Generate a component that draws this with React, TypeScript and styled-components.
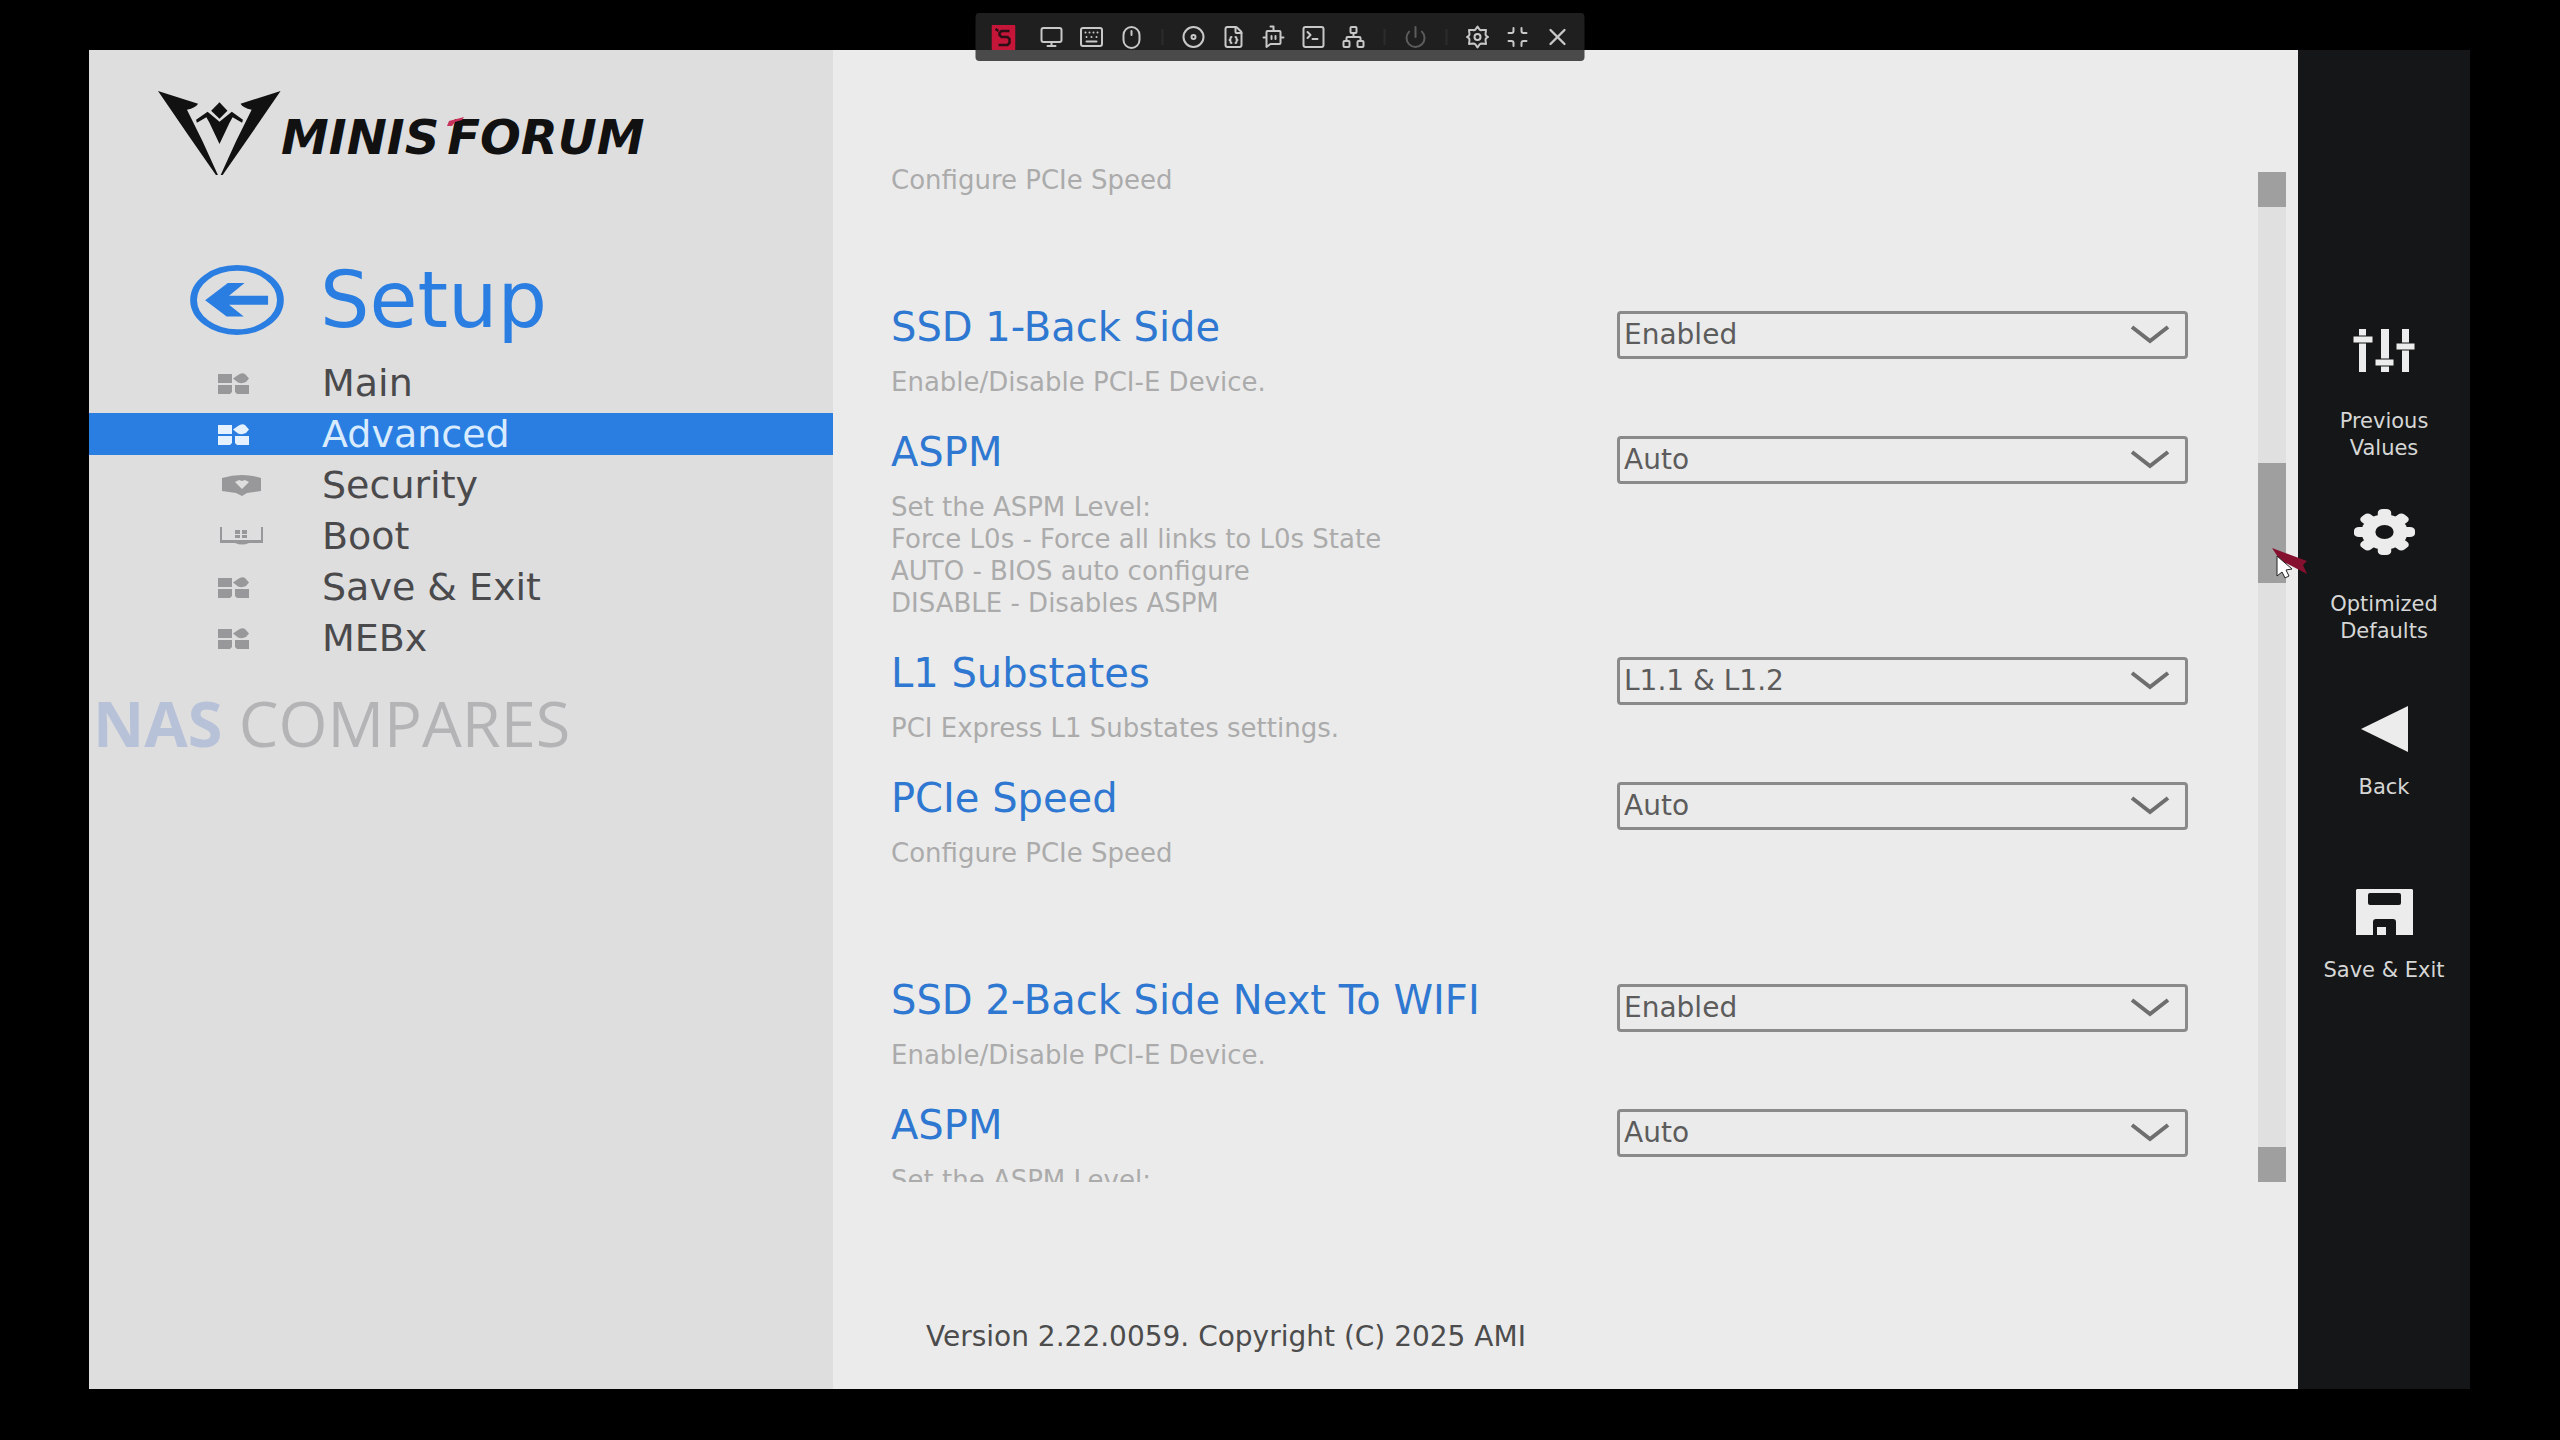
import React from "react";
import styled, { createGlobalStyle, css } from "styled-components";
import { Monitor, Mouse, Disc, FileJson, Network, Power, Minimize, X } from "lucide-react";

const ui = `"DejaVu Sans", Verdana, sans-serif`;
const accent = "#2a7de1";

const GlobalStyle = createGlobalStyle`
  *, *::before, *::after { box-sizing: border-box; }
  body { margin: 0; background: #000; font-family: ${ui}; }
  button, select { font: inherit; }
  h1, p, ul { margin: 0; padding: 0; }
`;

const Screen = styled.div`
  height: 100vh;
  min-height: 1240px;
  padding: 50px 90px 51px 89px;
  background: #000;
`;

const Frame = styled.div`
  height: 100%;
  display: grid;
  grid-template-columns: 744px 1fr 172px;
  grid-template-rows: minmax(0, 1fr);
`;

/* Remote-control toolbar */
const Toolbar = styled.div`
  position: fixed;
  z-index: 2;
  top: 13px;
  left: 50%;
  transform: translateX(-50%);
  height: 48px;
  padding: 0 7px 0 8px;
  display: flex;
  align-items: center;
  border-radius: 4px;
  background: rgba(38, 38, 38, 0.82);
`;

const Tool = styled.button<{ $dim?: boolean }>`
  width: 40px;
  height: 40px;
  padding: 0;
  display: grid;
  place-items: center;
  border: 0;
  background: none;
  color: ${(p) => (p.$dim ? "#5c5c5c" : "#c8c8c8")};
`;

const Brand = styled.span`
  width: 40px;
  margin-right: 8px;
  display: grid;
  place-items: center;
`;

const Divider = styled.span`
  width: 2px;
  height: 16px;
  margin: 0 10px;
  background: #2c2c2c;
`;

/* Sidebar */
const Sidebar = styled.aside`
  display: flex;
  flex-direction: column;
  background: #dededf;
`;

const Logo = styled.div`
  height: 126px;
  padding: 41px 0 0 69px;
  display: flex;
  align-items: flex-start;
`;

const Wordmark = styled.div`
  position: relative;
  padding-top: 18px;
  display: flex;
  gap: 8px;
  font-size: 48px;
  line-height: 56px;
  font-weight: 700;
  font-style: italic;
  color: #111;
`;

const RedTip = styled.svg`
  position: absolute;
  left: 166px;
  top: 26px;
`;

const SetupHeader = styled.header`
  height: 186px;
  padding: 62px 0 0 101px;
  display: flex;
  align-items: center;
  gap: 36px;
`;

const BackButton = styled.button`
  width: 94px;
  height: 70px;
  padding: 0;
  border: 0;
  background: none;
`;

const Heading = styled.h1`
  font-size: 78px;
  line-height: 80px;
  font-weight: 400;
  color: ${accent};
`;

const Nav = styled.nav`
  display: grid;
  row-gap: 9px;
`;

const NavItem = styled.a<{ $active?: boolean }>`
  height: 42px;
  padding-left: 129px;
  display: grid;
  grid-template-columns: 104px 1fr;
  align-items: center;
  font-size: 38px;
  line-height: 42px;
  text-decoration: none;
  color: ${(p) => (p.$active ? "#d9ecff" : "#4a4a4c")};
  background: ${(p) => (p.$active ? accent : "transparent")};
  svg { color: ${(p) => (p.$active ? "#e6f1ff" : "#98989a")}; }
`;

const Watermark = styled.p`
  margin-top: 24px;
  padding-left: 4px;
  font-family: "Open Sans", "Noto Sans", sans-serif;
  font-size: 63px;
  line-height: 80px;
  color: #b4b4b6;
  b { color: #b7c2d8; }
`;

/* Settings */
const Main = styled.main`
  min-width: 0;
  display: flex;
  flex-direction: column;
  background: #ebebeb;
`;

const Body = styled.div`
  flex: 1;
  min-height: 0;
  margin-top: 114px;
  padding: 0 12px 0 58px;
  display: flex;
`;

const List = styled.div`
  flex: 1;
  min-width: 0;
  overflow: hidden;
`;

const Entry = styled.div<{ $last?: boolean }>`
  padding-bottom: 31px;
  padding-right: 70px;
  display: grid;
  grid-template-columns: minmax(0, 1fr) 571px;
  ${(p) => p.$last && css`margin-bottom: 77px;`}
`;

const EntryLabel = styled.label`
  margin-bottom: 16px;
  font-size: 40px;
  line-height: 46px;
  white-space: nowrap;
  color: #2f78d2;
`;

const Help = styled.p`
  grid-column: 1;
  font-size: 26px;
  line-height: 32px;
  white-space: pre-line;
  color: #ababab;
`;

const Picker = styled.div`
  height: 48px;
  margin-top: 7px;
  display: grid;
  align-items: center;
  > * { grid-area: 1 / 1; }
  > svg { justify-self: end; margin-right: 18px; pointer-events: none; }
`;

const Select = styled.select`
  appearance: none;
  width: 100%;
  height: 48px;
  padding: 0 60px 2px 4px;
  border: 3px solid #8a8a8a;
  border-radius: 4px;
  background: transparent;
  font-size: 28px;
  color: #5c5c5c;
`;

const Scrollbar = styled.div`
  position: relative;
  width: 28px;
  margin-top: 8px;
  display: flex;
  flex-direction: column;
  background: #e0e0e0;
`;

const ScrollEnd = styled.button`
  height: 35px;
  padding: 0;
  border: 0;
  background: #9f9f9f;
`;

const Track = styled.div`
  flex: 1;
  padding-top: 256px;
`;

const Thumb = styled.div`
  height: 120px;
  background: #9f9f9f;
`;

const Pointer = styled.svg`
  position: absolute;
  left: 14px;
  top: 375px;
`;

const Footer = styled.footer`
  height: 207px;
  padding: 135px 0 0 93px;
  font-size: 28px;
  line-height: 40px;
  color: #4c4c4c;
`;

/* Action column */
const Actions = styled.aside`
  padding-top: 238px;
  background: #151617;
`;

const Action = styled.button<{ $double?: boolean }>`
  width: 100%;
  height: 183px;
  padding: 0;
  display: flex;
  flex-direction: column;
  align-items: center;
  border: 0;
  background: none;
  font-size: 21px;
  line-height: 27px;
  color: #d6d6d6;
  > span:first-child {
    height: 120px;
    padding-bottom: ${(p) => (p.$double ? 36 : 22)}px;
    display: flex;
    align-items: flex-end;
    color: #ececec;
  }
`;

const TilesIcon = () => (
  <svg width="31" height="21" viewBox="0 0 31 21" fill="currentColor" aria-hidden="true">
    <path d="M0 1h14v9H0zM0 12h14v7l-2 2H0zM17 12h14v9H19l-2-2z" />
    <path d="M15 5.500L20 2Q24 -1 27 1L31 5.500L28 9Q24 11 20 9.500Z" />
  </svg>
);

const ShieldIcon = () => (
  <svg width="43" height="21" viewBox="-4 0 43 21" fill="currentColor" aria-hidden="true">
    <path fillRule="evenodd" d="M0 3Q10 0 20 0T39 3V16L25 18L20 21L14 18L0 16ZM13 7L20 14L27 7L23 5L20 6L17 5Z" />
  </svg>
);

const DriveIcon = () => (
  <svg width="45" height="19" viewBox="-2 0 45 19" fill="currentColor" aria-hidden="true">
    <path d="M0 0h2v13h39V0h2v16H29q-7 3-14 0H0z" />
    <path d="M15 3h5v4h-5zM22 3h5v4h-5zM15 8h5v3h-5zM22 8h5v3h-5z" />
  </svg>
);

const Stroke = ({ children }: { children: React.ReactNode }) => (
  <svg width="24" height="24" viewBox="0 0 24 24" fill="none" stroke="currentColor" strokeWidth="2" strokeLinecap="round" strokeLinejoin="round" aria-hidden="true">
    {children}
  </svg>
);

const navItems = [
  { label: "Main", icon: <TilesIcon /> },
  { label: "Advanced", icon: <TilesIcon />, active: true },
  { label: "Security", icon: <ShieldIcon /> },
  { label: "Boot", icon: <DriveIcon /> },
  { label: "Save & Exit", icon: <TilesIcon /> },
  { label: "MEBx", icon: <TilesIcon /> },
];

const aspmHelp = "Set the ASPM Level:\nForce L0s - Force all links to L0s State\nAUTO - BIOS auto configure\nDISABLE - Disables ASPM";

const settings = [
  { id: "ssd1", label: "SSD 1-Back Side", help: "Enable/Disable PCI-E Device.", value: "Enabled" },
  { id: "aspm1", label: "ASPM", help: aspmHelp, value: "Auto" },
  { id: "l1", label: "L1 Substates", help: "PCI Express L1 Substates settings.", value: "L1.1 & L1.2" },
  { id: "speed1", label: "PCIe Speed", help: "Configure PCIe Speed", value: "Auto", last: true },
  { id: "ssd2", label: "SSD 2-Back Side Next To WIFI", help: "Enable/Disable PCI-E Device.", value: "Enabled" },
  { id: "aspm2", label: "ASPM", help: "Set the ASPM Level:", value: "Auto" },
];

export default function App() {
  return (
    <Screen>
      <GlobalStyle />
      <Toolbar>
        <Brand>
          <svg width="24" height="25" viewBox="0 0 24 25" aria-hidden="true">
            <rect width="24" height="25" rx="1" fill="#c5163a" />
            <path d="M18 6H10L8 8v2l2 2h6l2 2v4l-2 2H7M4 4l3 2" fill="none" stroke="#2a1015" strokeWidth="2.500" />
          </svg>
        </Brand>
        <Tool aria-label="Display"><Monitor size={24} /></Tool>
        <Tool aria-label="Keyboard">
          <Stroke>
            <rect x="1.500" y="3" width="21" height="18" rx="2" />
            <path d="M6 7.500h.01M10 7.500h.01M14 7.500h.01M18 7.500h.01M7 12h.01M12 12h.01M17 12h.01M7 16.500h10" />
          </Stroke>
        </Tool>
        <Tool aria-label="Mouse">
          <Stroke>
            <rect x="4" y="2" width="16" height="21" rx="8" />
            <path d="M12 6v4" />
          </Stroke>
        </Tool>
        <Divider />
        <Tool aria-label="Virtual media"><Disc size={24} /></Tool>
        <Tool aria-label="Script"><FileJson size={24} /></Tool>
        <Tool aria-label="Assistant">
          <Stroke>
            <path d="M9 1.500h3V6M6 6h12q1 0 1 1v11q0 1-1 1H9l-4 3V7q0-1 1-1M2 12.500h3M19 12.500h3M10 11v3M14 11v3" />
          </Stroke>
        </Tool>
        <Tool aria-label="Terminal">
          <Stroke>
            <rect x="2" y="2" width="20" height="20" rx="2" />
            <path d="M6 7l3 3-3 3M11 14h5" />
          </Stroke>
        </Tool>
        <Tool aria-label="Network"><Network size={24} /></Tool>
        <Divider />
        <Tool aria-label="Power" $dim><Power size={24} /></Tool>
        <Divider />
        <Tool aria-label="Settings">
          <Stroke>
            <path d="M10 4.500L12 1.500l2 3q1 1 2.500.5L20.500 5 20 9q0 1.500 1 2l1.500 1-1.500 1q-1 .5-1 2l.5 4-4-.5q-1.500 0-2.500 1l-2 3-2-3q-1-1-2.500-1l-4 .5L4 15q0-1.500-1-2l-1.500-1L3 11q1-.5 1-2L3.500 5l4 0q1.500.5 2.500-.5z" />
            <circle cx="12" cy="12" r="3" />
          </Stroke>
        </Tool>
        <Tool aria-label="Exit full screen"><Minimize size={24} /></Tool>
        <Tool aria-label="Close"><X size={28} /></Tool>
      </Toolbar>

      <Frame>
        <Sidebar>
          <Logo>
            <svg width="123" height="84" viewBox="0 0 310 252" preserveAspectRatio="none" fill="#111" aria-hidden="true">
              <path d="M0 0L101 38Q95 50 73 56L112 150L151 252H146L76 132Z" />
              <path d="M309 0L208 38Q214 50 236 56L197 150L158 252H163L233 132Z" />
              <path d="M155 34L175 59L155 83L134 59Z" />
              <path d="M96 86L125 62L155 92L186 62L214 86L212 95L188 79L180 96L155 159L130 96L122 79L98 95Z" />
            </svg>
            <Wordmark>
              <span>MINIS</span>
              <span>FORUM</span>
              <RedTip width="18" height="9" viewBox="0 0 18 9" aria-hidden="true">
                <path d="M0 9L2 4L17 0L15 3L8 5L5 9Z" fill="#c8325c" />
              </RedTip>
            </Wordmark>
          </Logo>
          <SetupHeader>
            <BackButton aria-label="Back to home">
              <svg width="94" height="70" viewBox="0 0 236 209" preserveAspectRatio="none" aria-hidden="true">
                <ellipse cx="118" cy="104.500" rx="109" ry="96" fill="none" stroke={accent} strokeWidth="17" />
                <path d="M38 105L95 54H137L98 92H196V119H98L135 154H92Z" fill={accent} />
              </svg>
            </BackButton>
            <Heading>Setup</Heading>
          </SetupHeader>
          <Nav>
            {navItems.map((n) => (
              <NavItem key={n.label} href="#" $active={n.active} aria-current={n.active ? "page" : undefined}>
                {n.icon}
                <span>{n.label}</span>
              </NavItem>
            ))}
          </Nav>
          <Watermark><b>NAS</b> COMPARES</Watermark>
        </Sidebar>

        <Main>
          <Body>
            <List>
              <Entry $last>
                <Help>Configure PCIe Speed</Help>
              </Entry>
              {settings.map((s) => (
                <Entry key={s.id} $last={s.last}>
                  <EntryLabel htmlFor={s.id}>{s.label}</EntryLabel>
                  <Picker>
                    <Select id={s.id} defaultValue={s.value}>
                      <option>{s.value}</option>
                    </Select>
                    <svg width="40" height="20" viewBox="0 0 40 20" fill="none" stroke="#6e6e6e" strokeWidth="4" aria-hidden="true">
                      <path d="M2 2L20 16L38 2" />
                    </svg>
                  </Picker>
                  <Help>{s.help}</Help>
                </Entry>
              ))}
            </List>
            <Scrollbar>
              <ScrollEnd aria-label="Scroll up" />
              <Track><Thumb /></Track>
              <ScrollEnd aria-label="Scroll down" />
              <Pointer width="38" height="32" viewBox="0 0 38 32" aria-hidden="true">
                <path d="M0 1L35 14L31 18L35 27L8 13Z" fill="#86102f" />
                <path d="M5 9V29L10 25L13 31L17 29L14 23L20 22Z" fill="#fff" stroke="#222" strokeWidth="1" />
              </Pointer>
            </Scrollbar>
          </Body>
          <Footer>Version 2.22.0059. Copyright (C) 2025 AMI</Footer>
        </Main>

        <Actions>
          <Action $double>
            <span>
              <svg width="62" height="43" viewBox="0 0 62 43" fill="currentColor" aria-hidden="true">
                <path d="M6 0h7v43H6zM28 0h8v43h-8zM49 0h7v43h-7z" />
                <path d="M0 7h20v7H0zM22 30h19v7H22zM43 14h19v7H43z" stroke="#151617" strokeWidth="1" />
              </svg>
            </span>
            <span>Previous<br />Values</span>
          </Action>
          <Action $double>
            <span>
              <svg width="61" height="46" viewBox="-50 -50 100 100" preserveAspectRatio="none" fill="currentColor" aria-hidden="true">
                {[0, 45, 90, 135].map((a) => (
                  <rect key={a} x="-11" y="-50" width="22" height="100" rx="8" transform={`rotate(${a})`} />
                ))}
                <circle r="38" />
                <circle r="15" fill="#151617" />
              </svg>
            </span>
            <span>Optimized<br />Defaults</span>
          </Action>
          <Action>
            <span>
              <svg width="47" height="46" viewBox="0 0 47 46" fill="currentColor" aria-hidden="true">
                <path d="M47 0V46L0 23Z" />
              </svg>
            </span>
            <span>Back</span>
          </Action>
          <Action>
            <span>
              <svg width="57" height="46" viewBox="0 0 57 46" fill="currentColor" aria-hidden="true">
                <path fillRule="evenodd" d="M1 0H56L57 1V46H40V33Q40 30 37 30H20Q17 30 17 33V46H0V1ZM14 4Q12 4 12 6V14Q12 16 14 16H43Q45 16 45 14V6Q45 4 43 4Z" />
                <path d="M21 38H30V46H21Z" />
              </svg>
            </span>
            <span>Save &amp; Exit</span>
          </Action>
        </Actions>
      </Frame>
    </Screen>
  );
}
